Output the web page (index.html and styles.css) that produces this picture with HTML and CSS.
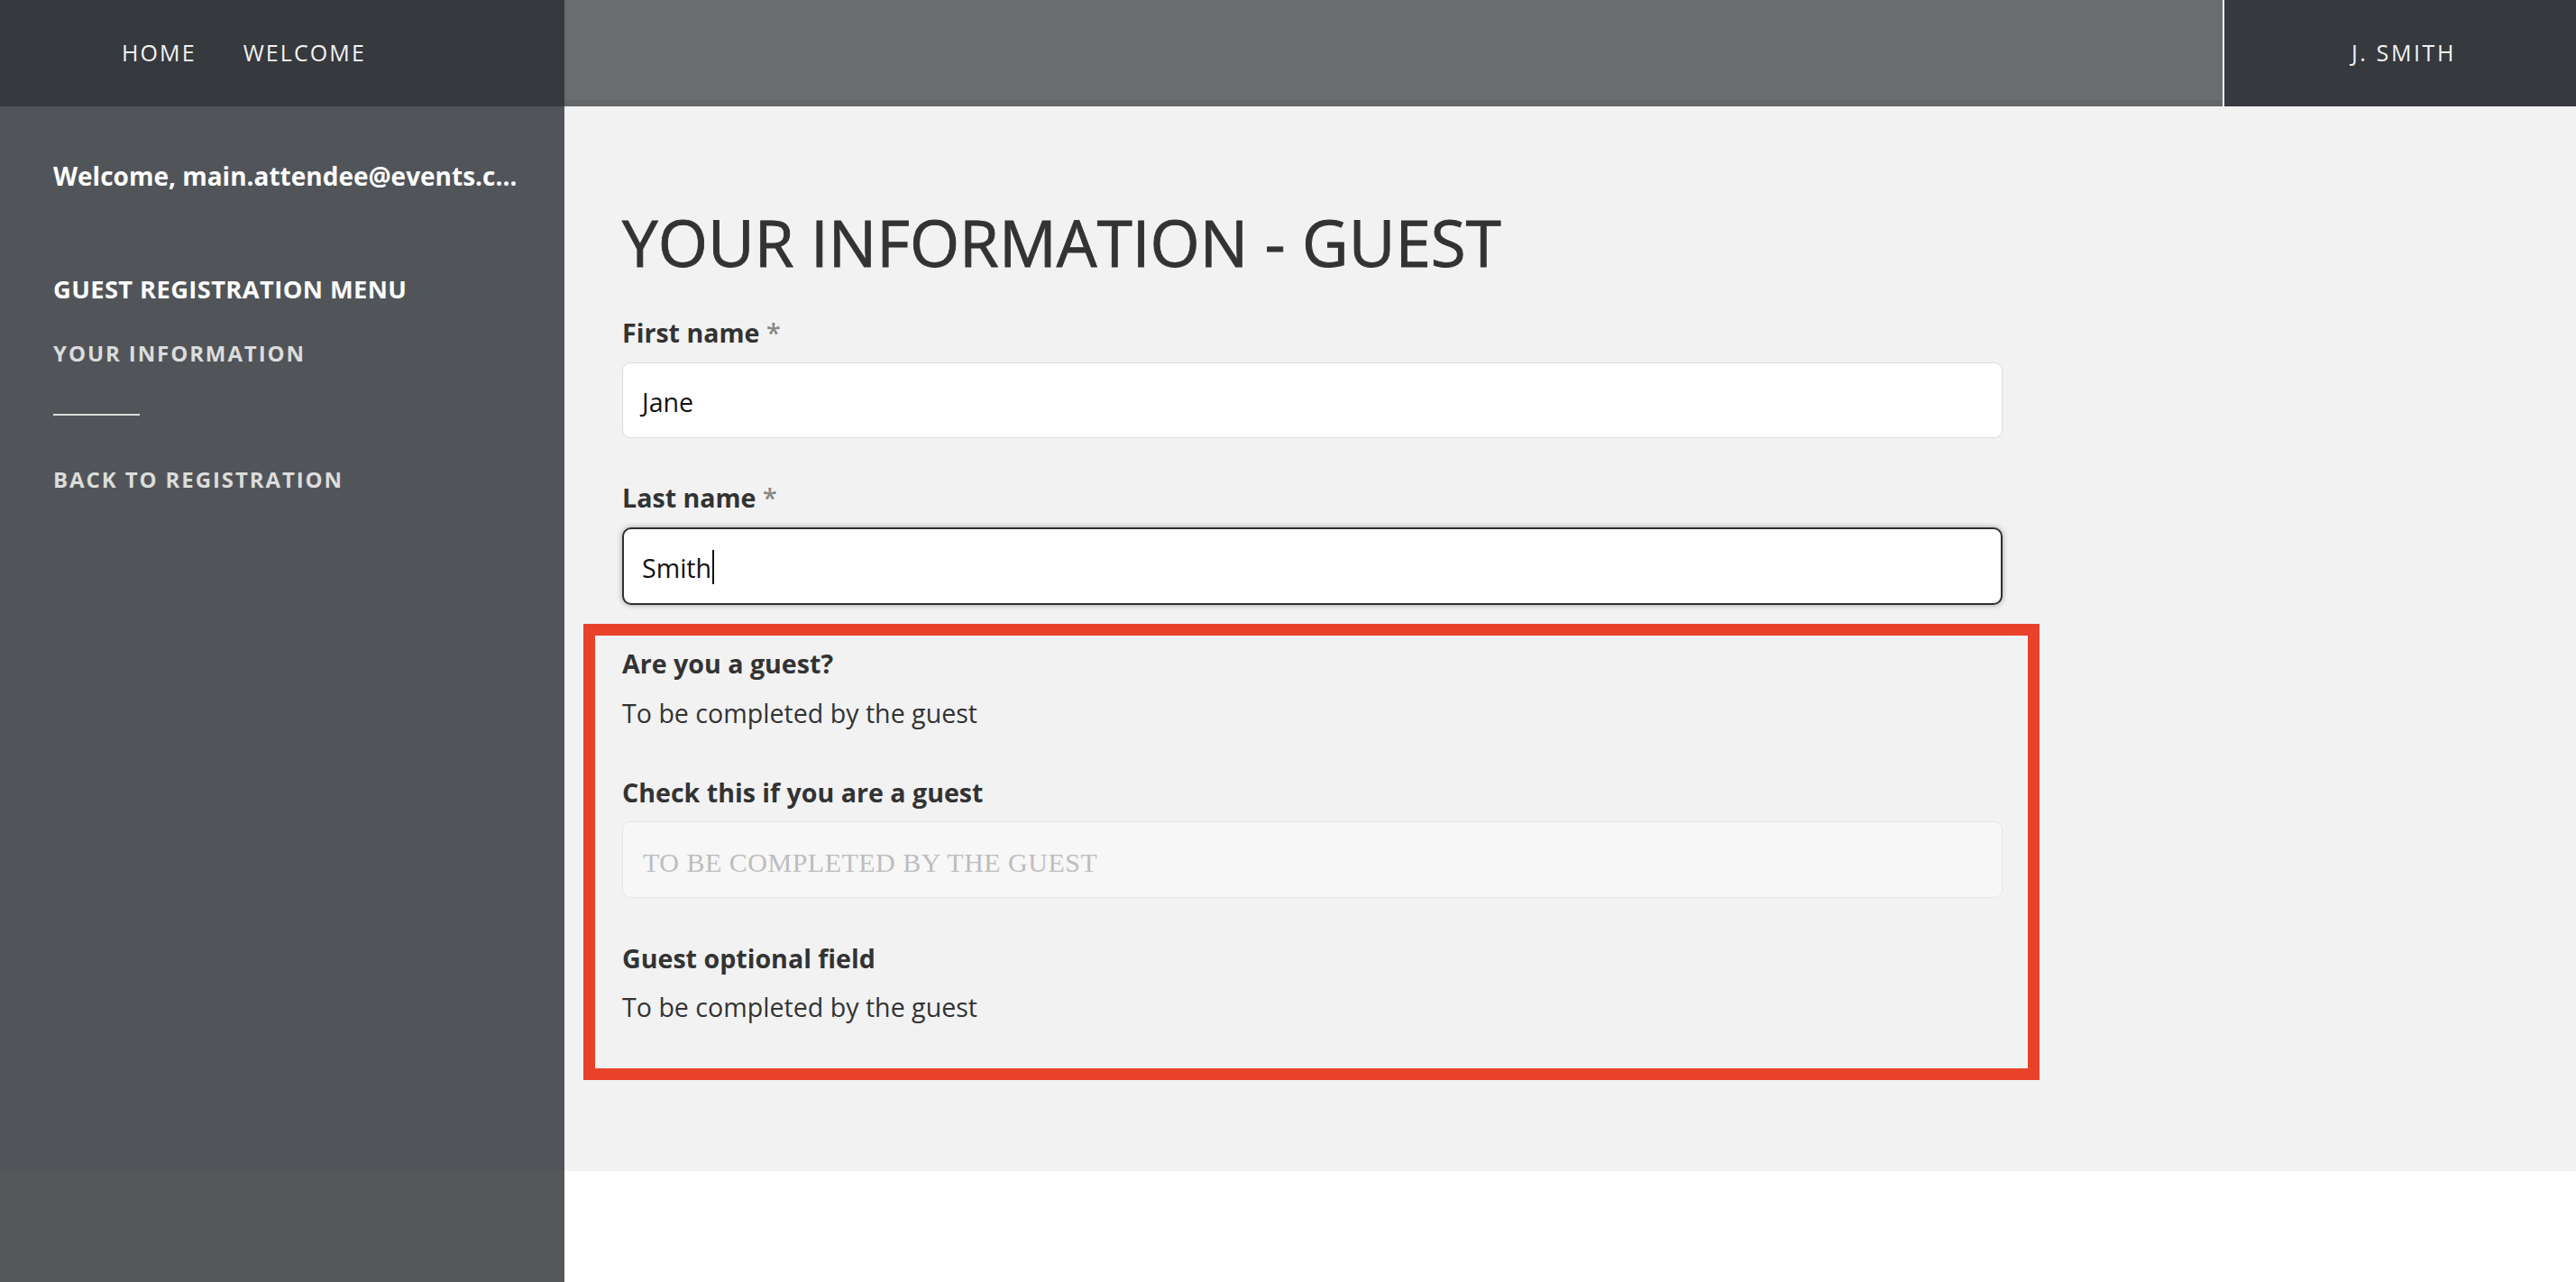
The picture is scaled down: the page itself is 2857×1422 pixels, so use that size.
FILE: index.html
```html
<!DOCTYPE html>
<html lang="en">
<head>
<meta charset="utf-8">
<title>Your information - Guest</title>
<link rel="stylesheet" href="styles.css">
</head>
<body>
<header class="topbar">
  <nav class="topbar-nav">
    <a class="topbar-link" href="#">HOME</a>
    <a class="topbar-link" href="#">WELCOME</a>
  </nav>
  <div class="topbar-fill"></div>
  <div class="topbar-user">J. SMITH</div>
</header>
<div class="layout">
  <aside class="sidebar">
    <p class="sidebar-welcome">Welcome, main.attendee@events.c…</p>
    <h2 class="sidebar-title">GUEST REGISTRATION MENU</h2>
    <a class="sidebar-link" href="#">YOUR INFORMATION</a>
    <hr class="sidebar-rule">
    <a class="sidebar-link" href="#">BACK TO REGISTRATION</a>
  </aside>
  <main class="content">
    <h1 class="page-title">YOUR INFORMATION - GUEST</h1>
    <div class="form">
      <div class="field">
        <label class="field-label">First name <span class="req">*</span></label>
        <div class="field-input">Jane</div>
      </div>
      <div class="field field-second">
        <label class="field-label">Last name <span class="req">*</span></label>
        <div class="field-input is-focused">Smith<span class="caret"></span></div>
      </div>
      <section class="highlight">
        <div class="field">
          <label class="field-label">Are you a guest?</label>
          <p class="field-value">To be completed by the guest</p>
        </div>
        <div class="field field-gap">
          <label class="field-label">Check this if you are a guest</label>
          <div class="field-input is-disabled">TO BE COMPLETED BY THE GUEST</div>
        </div>
        <div class="field field-gap">
          <label class="field-label">Guest optional field</label>
          <p class="field-value">To be completed by the guest</p>
        </div>
      </section>
    </div>
  </main>
</div>
</body>
</html>
```

FILE: styles.css
```css
* {
  box-sizing: border-box;
}

html, body {
  margin: 0;
  padding: 0;
}

body {
  font-family: "Open Sans", "Noto Sans", sans-serif;
  color: #333;
  min-height: 1422px;
  background: linear-gradient(to right, #54585b 626px, #ffffff 626px);
}

/* ---------- top bar ---------- */
.topbar {
  display: flex;
  height: 118px;
}

.topbar-nav {
  width: 626px;
  background: #36393d;
  display: flex;
  align-items: center;
  gap: 52px;
  padding-left: 135px;
  padding-bottom: 2px;
}

.topbar-link {
  color: #f2f2f2;
  text-decoration: none;
  font-size: 25px;
  letter-spacing: 2.1px;
}

.topbar-fill {
  flex: 1;
  background: #6a6d70;
  box-shadow: inset 0 -7px 0 #646769;
  border-right: 2px solid #ffffff;
}

.topbar-user {
  width: 390px;
  background: #36393d;
  color: #f2f2f2;
  font-size: 25px;
  letter-spacing: 2.6px;
  display: flex;
  align-items: center;
  justify-content: center;
  padding: 0 0 2px 8px;
}

/* ---------- layout ---------- */
.layout {
  display: flex;
  height: 1181px;
}

.sidebar {
  width: 626px;
  flex: none;
  background: #515559;
  padding: 58px 54px 0 59px;
  display: flex;
  flex-direction: column;
  align-items: flex-start;
}

.sidebar-welcome {
  margin: 0;
  width: 100%;
  color: #ffffff;
  font-weight: 700;
  font-size: 28px;
  line-height: 38px;
  white-space: nowrap;
  overflow: hidden;
}

.sidebar-title {
  margin: 89px 0 0;
  color: #ffffff;
  font-weight: 700;
  font-size: 27.3px;
  line-height: 36px;
  letter-spacing: 0.4px;
}

.sidebar-link {
  margin-top: 37px;
  color: #dcdcdc;
  text-decoration: none;
  font-weight: 700;
  font-size: 24px;
  line-height: 32px;
  letter-spacing: 1.9px;
}

.sidebar-rule {
  margin: 51px 0 0;
  width: 96px;
  height: 2px;
  border: 0;
  background: #dcdcdc;
}

.sidebar-rule + .sidebar-link {
  margin-top: 55px;
  letter-spacing: 1.9px;
}

/* ---------- content ---------- */
.content {
  flex: 1;
  background: #f2f2f2;
  padding: 108px 0 0 64px;
}

.page-title {
  margin: 0;
  font-weight: 400;
  font-size: 71px;
  line-height: 85px;
  color: #333;
  -webkit-text-stroke: 0.9px #333;
}

.form {
  width: 1531px;
  margin-top: 39px;
}

.field {
  display: flex;
  flex-direction: column;
}

.field-second {
  margin-top: 47px;
}

.field-gap {
  margin-top: 50px;
}

.field-label {
  font-weight: 700;
  font-size: 28.6px;
  line-height: 38px;
  color: #333;
}

.req {
  color: #888;
  font-weight: 600;
}

.field-input {
  margin-top: 14px;
  height: 84px;
  background: #ffffff;
  border: 1px solid #dcdcdc;
  border-radius: 9px;
  padding: 2px 21px 0;
  display: flex;
  align-items: center;
  font-size: 28.6px;
  color: #111;
}

.field-input.is-focused {
  height: 86px;
  border: 2px solid #2d3034;
  border-radius: 10px;
  padding-left: 20px;
  box-shadow: 0 0 6px rgba(0, 0, 0, 0.35);
}

.caret {
  display: inline-block;
  width: 2px;
  height: 38px;
  background: #111;
  margin-left: 1px;
}

.field-input.is-disabled {
  margin-top: 13px;
  height: 85px;
  background: #f7f7f7;
  border-color: #e6e6e6;
  font-family: "Liberation Serif", "DejaVu Serif", serif;
  font-size: 30px;
  letter-spacing: 0.5px;
  color: #bdbdbd;
  padding-top: 6px;
  padding-left: 22px;
}

.field-value {
  margin: 17px 0 0;
  font-size: 28.6px;
  line-height: 38px;
  color: #333;
}

.highlight {
  margin: 21px -41px 0 -43px;
  border: 13px solid #e8422a;
  padding: 12px 28px 49px 30px;
}

.highlight .field-gap:last-child {
  margin-top: 48px;
}

.highlight .field-gap:last-child .field-value {
  margin-top: 16px;
}
```
